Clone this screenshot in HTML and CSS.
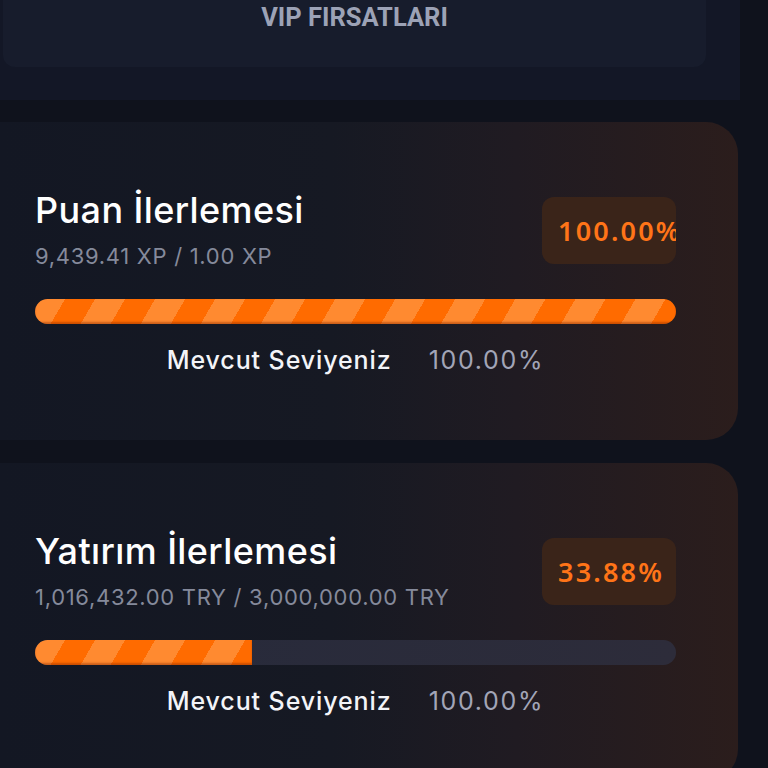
FILE: index.html
```html
<!DOCTYPE html>
<html lang="tr">
<head>
<meta charset="utf-8">
<title>VIP</title>
<link rel="stylesheet" href="styles.css">
</head>
<body>
<div class="page">
  <section class="top-section">
    <div class="top-card">
      <div class="top-title">VIP FIRSATLARI</div>
    </div>
  </section>

  <section class="card">
    <div class="card-head">
      <div class="head-text">
        <div class="card-title">Puan İlerlemesi</div>
        <div class="card-sub">9,439.41 XP / 1.00 XP</div>
      </div>
      <div class="badge">100.00%</div>
    </div>
    <div class="track"><div class="fill" style="width:100%"></div></div>
    <div class="level">
      <span class="level-label">Mevcut Seviyeniz</span>
      <span class="level-value">100.00%</span>
    </div>
  </section>

  <section class="card">
    <div class="card-head">
      <div class="head-text">
        <div class="card-title">Yatırım İlerlemesi</div>
        <div class="card-sub">1,016,432.00 TRY / 3,000,000.00 TRY</div>
      </div>
      <div class="badge">33.88%</div>
    </div>
    <div class="track"><div class="fill" style="width:33.88%"></div></div>
    <div class="level">
      <span class="level-label">Mevcut Seviyeniz</span>
      <span class="level-value">100.00%</span>
    </div>
  </section>
</div>
</body>
</html>
```

FILE: styles.css
```css
* { box-sizing: border-box; }

html, body {
  margin: 0;
  padding: 0;
  background: #0f121c;
  height: 768px;
  overflow: hidden;
}

body {
  font-family: Inter, "Noto Sans", sans-serif;
  color: #ffffff;
}

.page {
  width: 738px;
  display: flex;
  flex-direction: column;
}

.top-section {
  width: 740px;
  height: 100px;
  background: #131726;
  padding-left: 3px;
}

.top-card {
  width: 703px;
  height: 67px;
  background: #171c2c;
  border-radius: 0 0 12px 12px;
  padding-top: 2px;
  text-align: center;
}

.top-title {
  font-family: Roboto, sans-serif;
  font-weight: 700;
  font-size: 25.5px;
  line-height: 30px;
  color: #9ca2b6;
}

.card {
  margin-top: 22px;
  height: 318px;
  border-radius: 0 32px 32px 0;
  background: linear-gradient(90deg, #131723 0%, #161923 45%, #201b22 70%, #2b1d1c 100%);
  padding: 66px 62px 0 35px;
}

.card + .card {
  margin-top: 23px;
}

.card-head {
  display: flex;
  justify-content: space-between;
  align-items: flex-start;
}

.head-text {
  display: flex;
  flex-direction: column;
}

.card-title {
  font-size: 36px;
  font-weight: 500;
  line-height: 44px;
  color: #ffffff;
  letter-spacing: 0.4px;
}

.card-sub {
  margin-top: 9px;
  font-size: 22px;
  line-height: 30px;
  letter-spacing: 0.7px;
  color: #858a9b;
}

.badge {
  margin-top: 9px;
  width: 134px;
  height: 67px;
  flex: none;
  border-radius: 12px;
  background: #3a2419;
  padding: 0 16px;
  overflow: hidden;
  white-space: nowrap;
  text-align: center;
  font-family: "Noto Sans", sans-serif;
  font-weight: 600;
  font-size: 27px;
  letter-spacing: 2.2px;
  line-height: 67px;
  color: #ff7418;
}

.track {
  margin-top: 28px;
  height: 25px;
  border-radius: 13px;
  overflow: hidden;
  background: linear-gradient(90deg, #262a3b 0%, #2d2c3a 100%);
}

.fill {
  height: 100%;
  background: repeating-linear-gradient(120deg,
    #ff8a30 0px, #ff8a30 26px,
    #ff6b00 26px, #ff6b00 52px);
  box-shadow: inset 0 -2px 2px rgba(140, 45, 0, 0.45);
}

.level {
  margin-top: 21px;
  display: flex;
  justify-content: center;
  gap: 37px;
  line-height: 30px;
}

.level-label {
  font-size: 25px;
  font-weight: 500;
  letter-spacing: 0.9px;
  color: #f3f4f8;
}

.level-value {
  font-size: 25px;
  font-weight: 400;
  letter-spacing: 1.7px;
  color: #a2a5b7;
}
```
